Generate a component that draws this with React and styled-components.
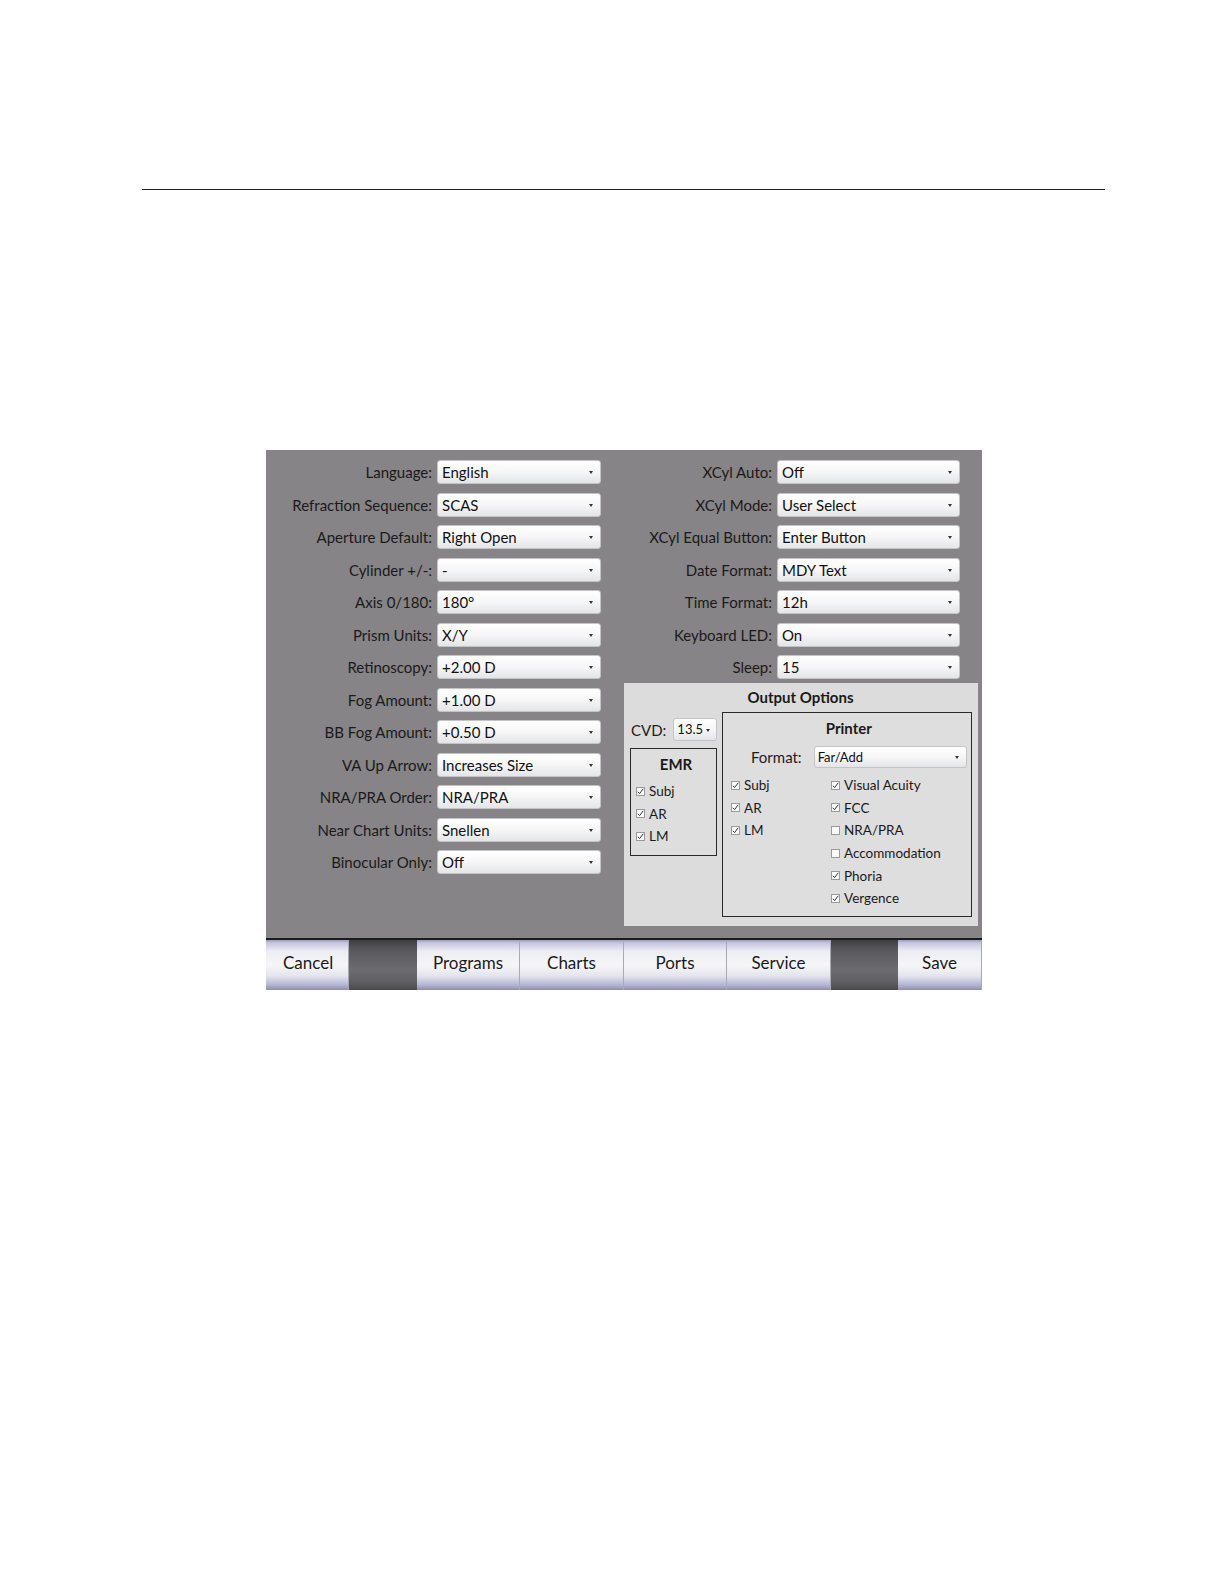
import React from 'react';
import styled, { createGlobalStyle } from 'styled-components';

const GlobalStyle = createGlobalStyle`
  html, body {
    margin: 0;
    padding: 0;
    background: #ffffff;
  }
  body {
    font-family: Lato, "Open Sans", "DejaVu Sans", sans-serif;
    color: #1c1c1c;
  }
`;

const Page = styled.div`
  padding-top: 189px;
  padding-bottom: 100px;
`;

const Rule = styled.div`
  margin-left: 142px;
  width: 963px;
  height: 1px;
  background: #222;
`;

const Screen = styled.div`
  margin: 260px 0 0 266px;
  width: 716px;
  height: 540px;
  display: flex;
  flex-direction: column;
  background: #868486;
`;

const Body = styled.div`
  flex: 1;
  display: flex;
  padding-top: 10px;
  border-bottom: 2px solid #1c1c1e;
`;

const FormGrid = styled.div`
  display: grid;
  grid-template-columns: ${(p) => p.$label}px ${(p) => p.$field}px;
  grid-auto-rows: 24px;
  row-gap: 8.5px;
  column-gap: 5px;
  align-content: start;
`;

const LeftCol = styled.div`
  width: 358px;
`;

const RightCol = styled.div`
  width: 358px;
  display: flex;
  flex-direction: column;
`;

const Label = styled.div`
  font-size: 15px;
  line-height: 24px;
  text-align: right;
  white-space: nowrap;
  color: #1a1a1a;
`;

const Select = styled.div`
  position: relative;
  height: ${(p) => p.$h || 24}px;
  box-sizing: border-box;
  border: 1px solid #c4c4c6;
  border-radius: 3px;
  background: linear-gradient(#ffffff 0%, #f6f6f7 50%, #e4e5e8 100%);
  font-size: ${(p) => p.$fs || 15}px;
  line-height: ${(p) => (p.$h || 24) - 2}px;
  padding-left: ${(p) => p.$pl || 4}px;
  color: #111;
  white-space: nowrap;
  &::after {
    content: '';
    position: absolute;
    right: ${(p) => p.$ar || 7}px;
    top: 50%;
    margin-top: -1px;
    border-left: 2.5px solid transparent;
    border-right: 2.5px solid transparent;
    border-top: 3px solid #333;
  }
`;

const OutputBox = styled.div`
  margin: 4px 4px 0 0;
  height: 243px;
  background: #dcdcdc;
  box-sizing: border-box;
  padding: 4px 7px 9px 6px;
  display: flex;
  flex-direction: column;
`;

const Title = styled.div`
  font-weight: 700;
  font-size: 15px;
  line-height: 20px;
  text-align: center;
  color: #1a1a1a;
`;

const OutputRow = styled.div`
  flex: 1;
  display: flex;
  gap: 5px;
  margin-top: 5px;
`;

const SideCol = styled.div`
  width: 87px;
  display: flex;
  flex-direction: column;
`;

const CvdRow = styled.div`
  display: flex;
  align-items: center;
  gap: 7px;
  margin-top: 6px;
  padding-left: 1px;
  font-size: 15px;
`;

const GroupBox = styled.div`
  border: 1px solid #2a2a2a;
  box-sizing: border-box;
  background: #dedede;
`;

const EmrBox = styled(GroupBox)`
  margin-top: 7px;
  height: 108px;
  padding: 5px 0 0 5px;
`;

const PrinterBox = styled(GroupBox)`
  flex: 1;
  padding: 5px 4px 0 8px;
`;

const FormatRow = styled.div`
  display: flex;
  align-items: center;
  margin-top: 8px;
  font-size: 15px;
  padding-left: 20px;
  gap: 12px;
`;

const CheckGrid = styled.div`
  display: grid;
  grid-template-columns: 100px 1fr;
  grid-auto-rows: 22.6px;
  margin-top: 6px;
`;

const CheckList = styled.div`
  display: grid;
  grid-auto-rows: 22.6px;
  margin-top: 6px;
`;

const CheckItem = styled.div`
  display: flex;
  align-items: center;
  gap: 4px;
  font-size: 13.5px;
  color: #1a1a1a;
  grid-column: ${(p) => p.$col || 'auto'};
  grid-row: ${(p) => p.$row || 'auto'};
`;

const Box = styled.span`
  width: 9px;
  height: 9px;
  border: 1px solid #9a9a9a;
  background: #fafafa;
  display: inline-flex;
  align-items: center;
  justify-content: center;
  box-sizing: border-box;
`;

const Check = ({ on, children, col, row }) => (
  <CheckItem $col={col} $row={row}>
    <Box>
      {on && (
        <svg width="7" height="7" viewBox="0 0 7 7">
          <path d="M0.8 3.8 L2.6 5.6 L6.2 0.8" fill="none" stroke="#333" strokeWidth="1" />
        </svg>
      )}
    </Box>
    {children}
  </CheckItem>
);

const BottomBar = styled.div`
  height: 50px;
  display: flex;
`;

const BarButton = styled.div`
  width: ${(p) => p.$w}px;
  box-sizing: border-box;
  border-right: 1px solid #a9a9b4;
  background: linear-gradient(
    #9c9cc0 0%,
    #c6c6e0 6%,
    #ececf4 22%,
    #f6f6f8 50%,
    #e4e4ee 72%,
    #b4b4d4 90%,
    #8e8eaa 100%
  );
  font-size: 17px;
  color: #1a1a1a;
  text-align: ${(p) => p.$align || 'center'};
  padding-left: ${(p) => p.$pl || 0}px;
  line-height: 46px;
`;

const Spacer = styled.div`
  width: ${(p) => p.$w}px;
  background: linear-gradient(#3e3e42 0%, #5a5a5e 20%, #6c6c70 60%, #5e5e62 85%, #4a4a4e 100%);
`;

const leftRows = [
  ['Language:', 'English'],
  ['Refraction Sequence:', 'SCAS'],
  ['Aperture Default:', 'Right Open'],
  ['Cylinder +/-:', '-'],
  ['Axis 0/180:', '180°'],
  ['Prism Units:', 'X/Y'],
  ['Retinoscopy:', '+2.00 D'],
  ['Fog Amount:', '+1.00 D'],
  ['BB Fog Amount:', '+0.50 D'],
  ['VA Up Arrow:', 'Increases Size'],
  ['NRA/PRA Order:', 'NRA/PRA'],
  ['Near Chart Units:', 'Snellen'],
  ['Binocular Only:', 'Off'],
];

const rightRows = [
  ['XCyl Auto:', 'Off'],
  ['XCyl Mode:', 'User Select'],
  ['XCyl Equal Button:', 'Enter Button'],
  ['Date Format:', 'MDY Text'],
  ['Time Format:', '12h'],
  ['Keyboard LED:', 'On'],
  ['Sleep:', '15'],
];

const App = () => (
  <>
    <GlobalStyle />
    <Page>
      <Rule />
      <Screen>
        <Body>
          <LeftCol>
            <FormGrid $label={166} $field={164}>
              {leftRows.map(([l, v]) => (
                <React.Fragment key={l}>
                  <Label>{l}</Label>
                  <Select>{v}</Select>
                </React.Fragment>
              ))}
            </FormGrid>
          </LeftCol>
          <RightCol>
            <FormGrid $label={148} $field={183}>
              {rightRows.map(([l, v]) => (
                <React.Fragment key={l}>
                  <Label>{l}</Label>
                  <Select>{v}</Select>
                </React.Fragment>
              ))}
            </FormGrid>
            <OutputBox>
              <Title>Output Options</Title>
              <OutputRow>
                <SideCol>
                  <CvdRow>
                    CVD:
                    <Select $h={23} $fs={13} $pl={3} $ar={6} style={{ width: 46 }}>
                      13.5
                    </Select>
                  </CvdRow>
                  <EmrBox>
                    <Title>EMR</Title>
                    <CheckList>
                      <Check on>Subj</Check>
                      <Check on>AR</Check>
                      <Check on>LM</Check>
                    </CheckList>
                  </EmrBox>
                </SideCol>
                <PrinterBox>
                  <Title>Printer</Title>
                  <FormatRow>
                    Format:
                    <Select $h={22} $fs={13} $pl={3} $ar={7} style={{ width: 153 }}>
                      Far/Add
                    </Select>
                  </FormatRow>
                  <CheckGrid>
                    <Check on col={1} row={1}>Subj</Check>
                    <Check on col={1} row={2}>AR</Check>
                    <Check on col={1} row={3}>LM</Check>
                    <Check on col={2} row={1}>Visual Acuity</Check>
                    <Check on col={2} row={2}>FCC</Check>
                    <Check col={2} row={3}>NRA/PRA</Check>
                    <Check col={2} row={4}>Accommodation</Check>
                    <Check on col={2} row={5}>Phoria</Check>
                    <Check on col={2} row={6}>Vergence</Check>
                  </CheckGrid>
                </PrinterBox>
              </OutputRow>
            </OutputBox>
          </RightCol>
        </Body>
        <BottomBar>
          <BarButton $w={83} $align="left" $pl={17}>Cancel</BarButton>
          <Spacer $w={68} />
          <BarButton $w={103}>Programs</BarButton>
          <BarButton $w={104}>Charts</BarButton>
          <BarButton $w={103}>Ports</BarButton>
          <BarButton $w={104}>Service</BarButton>
          <Spacer $w={67} />
          <BarButton $w={84}>Save</BarButton>
        </BottomBar>
      </Screen>
    </Page>
  </>
);

export default App;
